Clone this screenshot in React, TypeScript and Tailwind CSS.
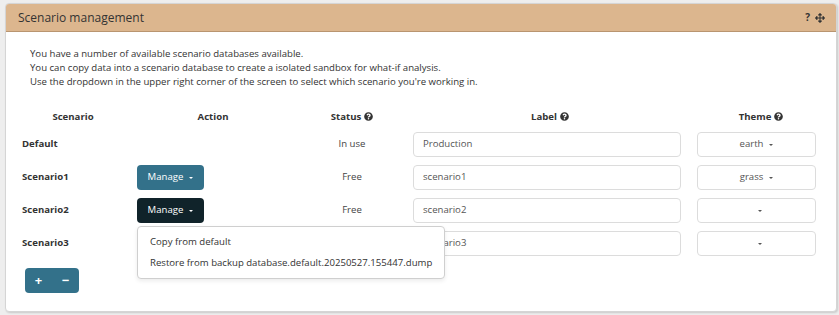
import { FaQuestionCircle, FaArrowsAlt } from 'react-icons/fa';

const font = { fontFamily: '"Open Sans", "Liberation Sans", sans-serif' };

const Caret = ({ color = 'border-t-white' }: { color?: string }) => (
  <span className={`inline-block w-0 h-0 border-x-[2.5px] border-x-transparent border-t-[2.5px] ${color} ml-[6px] align-middle`} />
);

const Help = () => <FaQuestionCircle className="inline-block ml-[3px] text-[#333] align-[-1px]" size={9} />;

const ManageButton = ({ dark }: { dark?: boolean }) => (
  <button
    className={`h-[25px] w-[67px] rounded-[4px] text-[9.6px] text-white flex items-center justify-center ${
      dark ? 'bg-[#10232a]' : 'bg-[#33718a]'
    }`}
  >
    Manage <Caret />
  </button>
);

const rows = [
  { name: 'Default', status: 'In use', label: 'Production', theme: 'earth', manage: false },
  { name: 'Scenario1', status: 'Free', label: 'scenario1', theme: 'grass', manage: true },
  { name: 'Scenario2', status: 'Free', label: 'scenario2', theme: '', manage: true, dark: true },
  { name: 'Scenario3', status: 'Free', label: 'scenario3', theme: '', manage: true },
];

const cols = 'grid grid-cols-[118px_160px_118px_278px_144px]';

export default function App() {
  return (
    <div className="w-[839px] h-[315px] bg-[#eeeeee] pt-[3px] pl-[5px] text-[#333]" style={font}>
      <div className="w-[832px] h-[309px] bg-white border border-[#d5d5d5] rounded-[4px] shadow-[1px_1px_2px_rgba(0,0,0,0.15)] overflow-hidden">
        <div className="h-[28px] bg-[#dcb68e] border-b border-[#b99570] flex items-center justify-between pl-[12px] pr-[11px]">
          <span className="text-[12px] text-[#333]">Scenario management</span>
          <span className="flex items-center gap-[5px] text-[#333]">
            <span className="text-[10px] font-bold">?</span>
            <FaArrowsAlt size={10} />
          </span>
        </div>
        <div className="pt-[15px] pl-[24px] text-[9.6px] leading-[14px] text-[#333]">
          <p>You have a number of available scenario databases available.</p>
          <p>You can copy data into a scenario database to create a isolated sandbox for what-if analysis.</p>
          <p>Use the dropdown in the upper right corner of the screen to select which scenario you're working in.</p>
        </div>
        <div className="relative pl-[9px] mt-[17px] text-[9.6px]">
          <div className={`${cols} h-[22px] items-center font-bold text-center`}>
            <span className="pr-[2px]">Scenario</span>
            <span>Action</span>
            <span>
              Status<Help />
            </span>
            <span>
              Label<Help />
            </span>
            <span>
              Theme<Help />
            </span>
          </div>
          {rows.map((r) => (
            <div key={r.name} className={`${cols} h-[33px] items-center`}>
              <span className="font-bold pl-[7px]">{r.name}</span>
              <span className="pl-[4px]">{r.manage && <ManageButton dark={r.dark} />}</span>
              <span className="text-center text-[#444]">{r.status}</span>
              <span className="pl-[2px]">
                <div className="h-[25px] w-[268px] border border-[#dcdcdc] rounded-[4px] flex items-center pl-[9px] text-[#555]">
                  {r.label}
                </div>
              </span>
              <span className="pl-[8px]">
                <div className="h-[25px] w-[119px] border border-[#dcdcdc] rounded-[4px] flex items-center justify-center text-[#555]">
                  {r.theme}
                  <Caret color="border-t-[#555]" />
                </div>
              </span>
            </div>
          ))}
          <div className="mt-[8px] ml-[10px] flex w-[54px] h-[25px] rounded-[4px] bg-[#33718a] text-white font-bold text-[13px]">
            <span className="w-[27px] flex items-center justify-center">+</span>
            <span className="w-[27px] flex items-center justify-center">−</span>
          </div>
          <div className="absolute left-[131px] top-[120px] w-[308px] h-[53px] bg-white border border-[#cfcfcf] rounded-[4px] shadow-[0_2px_4px_rgba(0,0,0,0.08)] pt-[5px] text-[9.6px] text-[#333] whitespace-nowrap">
            <div className="h-[21px] flex items-center pl-[12px]">Copy from default</div>
            <div className="h-[21px] flex items-center pl-[12px]">
              Restore from backup database.default.20250527.155447.dump
            </div>
          </div>
        </div>
      </div>
    </div>
  );
}
